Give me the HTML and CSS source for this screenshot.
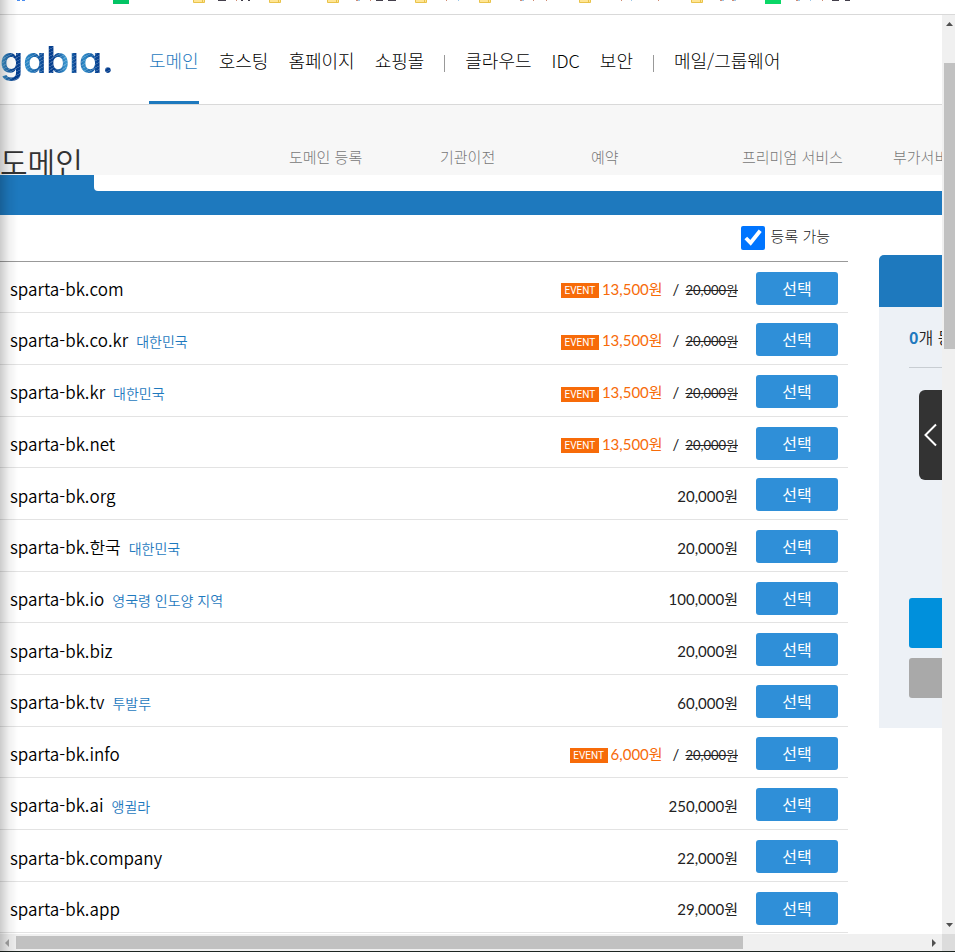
FILE: index.html
```html
<!DOCTYPE html>
<html lang="ko">
<head>
    <meta charset="UTF-8">
    <meta name="viewport" content="width=device-width, initial-scale=1.0">
    <title>도메인 - gabia</title>
    <link rel="stylesheet" href="styles.css">
</head>
<body>
    <div class="bookmarks">
        <svg width="955" height="14" viewBox="0 0 955 14" aria-hidden="true">
            <path d="M17 0h3v1h-3zM22 0h3v1h-3z" fill="#4b8df0"/>
            <path d="M113 0h16v4h-16z" fill="#03c465"/>
            <path d="M765 0h16v4h-16z" fill="#0ad767"/>
            <g fill="#ffe594" stroke="#e9c34a">
                <path d="M193.500-2v4.500h11v-4.500M202.500-2v4"/>
                <path d="M269.500-2v4.500h11v-4.500M278.500-2v4"/>
                <path d="M327.500-2v4.500h11v-4.500M336.500-2v4"/>
                <path d="M415.500-2v4.500h11v-4.500M424.500-2v4"/>
                <path d="M479.500-2v4.500h11v-4.500M488.500-2v4"/>
                <path d="M579.500-2v4.500h11v-4.500M588.500-2v4"/>
                <path d="M691.500-2v4.500h11v-4.500M700.500-2v4"/>
            </g>
            <path d="M218 0h8v1h-8zM241 0h2v1h-2zM248 0h2v1h-2zM376 0h7v1h-7zM388 0h8v1h-8zM832 0h7v1h-7zM845 0h5v1h-5z" fill="#44404c"/>
            <path d="M236 0h1v1h-1zM356 0h2v1h-2zM370 0h1v1h-1zM446 0h1v1h-1zM520 0h2v1h-2zM533 0h1v1h-1zM546 0h1v1h-1zM621 0h1v1h-1zM658 0h1v1h-1zM720 0h2v1h-2zM732 0h2v1h-2zM796 0h2v1h-2zM822 0h1v1h-1z" fill="#d08a72"/>
            <path d="M358 0h2v1h-2zM458 0h1v1h-1zM522 0h2v1h-2zM631 0h1v1h-1zM722 0h2v1h-2zM734 0h2v1h-2zM798 0h2v1h-2zM810 0h1v1h-1z" fill="#9cc8ea"/>
        </svg>
    </div>

    <div class="viewport">
        <div class="page">
            <header class="header">
                <a href="#" class="logo" aria-label="gabia">gabıa.</a>
                <nav class="nav">
                    <a href="#" class="nav-link active">도메인</a>
                    <a href="#" class="nav-link">호스팅</a>
                    <a href="#" class="nav-link">홈페이지</a>
                    <a href="#" class="nav-link">쇼핑몰</a>
                    <span class="nav-divider"></span>
                    <a href="#" class="nav-link">클라우드</a>
                    <a href="#" class="nav-link">IDC</a>
                    <a href="#" class="nav-link">보안</a>
                    <span class="nav-divider"></span>
                    <a href="#" class="nav-link">메일/그룹웨어</a>
                </nav>
            </header>

            <div class="subheader">
                <h1 class="subheader-title">도메인</h1>
                <nav class="subnav">
                    <a href="#">도메인 등록</a>
                    <a href="#">기관이전</a>
                    <a href="#">예약</a>
                    <a href="#">프리미엄 서비스</a>
                    <a href="#">부가서비스</a>
                </nav>
            </div>

            <div class="search-bar">
                <div class="search-box"></div>
            </div>

            <main class="content">
                <section class="results">
                    <div class="filter">
                        <input type="checkbox" id="available" checked>
                        <label for="available">등록 가능</label>
                    </div>
                    <table class="domains">
                        <tbody>
                            <tr>
                                <td class="domain">sparta-bk.com</td>
                                <td class="price"><span class="event">EVENT</span><span class="sale">13,500원</span><span class="slash">/</span><del>20,000원</del></td>
                                <td class="action"><button type="button" class="select">선택</button></td>
                            </tr>
                            <tr>
                                <td class="domain">sparta-bk.co.kr<span class="country">대한민국</span></td>
                                <td class="price"><span class="event">EVENT</span><span class="sale">13,500원</span><span class="slash">/</span><del>20,000원</del></td>
                                <td class="action"><button type="button" class="select">선택</button></td>
                            </tr>
                            <tr>
                                <td class="domain">sparta-bk.kr<span class="country">대한민국</span></td>
                                <td class="price"><span class="event">EVENT</span><span class="sale">13,500원</span><span class="slash">/</span><del>20,000원</del></td>
                                <td class="action"><button type="button" class="select">선택</button></td>
                            </tr>
                            <tr>
                                <td class="domain">sparta-bk.net</td>
                                <td class="price"><span class="event">EVENT</span><span class="sale">13,500원</span><span class="slash">/</span><del>20,000원</del></td>
                                <td class="action"><button type="button" class="select">선택</button></td>
                            </tr>
                            <tr>
                                <td class="domain">sparta-bk.org</td>
                                <td class="price">20,000원</td>
                                <td class="action"><button type="button" class="select">선택</button></td>
                            </tr>
                            <tr>
                                <td class="domain">sparta-bk.한국<span class="country">대한민국</span></td>
                                <td class="price">20,000원</td>
                                <td class="action"><button type="button" class="select">선택</button></td>
                            </tr>
                            <tr>
                                <td class="domain">sparta-bk.io<span class="country">영국령 인도양 지역</span></td>
                                <td class="price">100,000원</td>
                                <td class="action"><button type="button" class="select">선택</button></td>
                            </tr>
                            <tr>
                                <td class="domain">sparta-bk.biz</td>
                                <td class="price">20,000원</td>
                                <td class="action"><button type="button" class="select">선택</button></td>
                            </tr>
                            <tr>
                                <td class="domain">sparta-bk.tv<span class="country">투발루</span></td>
                                <td class="price">60,000원</td>
                                <td class="action"><button type="button" class="select">선택</button></td>
                            </tr>
                            <tr>
                                <td class="domain">sparta-bk.info</td>
                                <td class="price"><span class="event">EVENT</span><span class="sale">6,000원</span><span class="slash">/</span><del>20,000원</del></td>
                                <td class="action"><button type="button" class="select">선택</button></td>
                            </tr>
                            <tr>
                                <td class="domain">sparta-bk.ai<span class="country">앵귈라</span></td>
                                <td class="price">250,000원</td>
                                <td class="action"><button type="button" class="select">선택</button></td>
                            </tr>
                            <tr>
                                <td class="domain">sparta-bk.company</td>
                                <td class="price">22,000원</td>
                                <td class="action"><button type="button" class="select">선택</button></td>
                            </tr>
                            <tr>
                                <td class="domain">sparta-bk.app</td>
                                <td class="price">29,000원</td>
                                <td class="action"><button type="button" class="select">선택</button></td>
                            </tr>
                        </tbody>
                    </table>
                </section>

                <aside class="cart">
                    <div class="cart-head"></div>
                    <div class="cart-body">
                        <p class="cart-count"><strong>0</strong>개 등록</p>
                        <button type="button" class="cart-button" aria-label="등록"></button>
                        <button type="button" class="cart-button secondary" aria-label="삭제"></button>
                    </div>
                    <button type="button" class="drawer" aria-label="열기">
                        <svg width="14" height="24" viewBox="0 0 14 24" fill="none" stroke="#fff" stroke-width="2"><path d="M12 1.500L1.500 12L12 22.500"/></svg>
                    </button>
                </aside>
            </main>
        </div>

        <div class="scroll-y">
            <svg width="7" height="4" viewBox="0 0 7 4" fill="#505050"><path d="M0 4L3.500 0L7 4z"/></svg>
            <div class="thumb-y"></div>
            <svg width="7" height="4" viewBox="0 0 7 4" fill="#505050"><path d="M0 0L3.500 4L7 0z"/></svg>
        </div>
        <div class="scroll-x">
            <svg width="4" height="8" viewBox="0 0 4 8" fill="#a3a3a3"><path d="M4 0L0 4L4 8z"/></svg>
            <div class="track-x"><div class="thumb-x"></div></div>
            <svg width="4" height="8" viewBox="0 0 4 8" fill="#505050"><path d="M0 0L4 4L0 8z"/></svg>
        </div>
        <div class="corner"></div>
    </div>
    <div class="edge-shadow"></div>
</body>
</html>
```

FILE: styles.css
```css
* {
    margin: 0;
    padding: 0;
    box-sizing: border-box;
}

body {
    display: flex;
    flex-direction: column;
    height: 100vh;
    overflow: hidden;
    background-color: #fff;
    color: #222;
    font-family: 'Noto Sans CJK KR', sans-serif;
    font-weight: 350;
    font-size: 15px;
    border-bottom: 1px solid #1d2522;
}

a {
    color: inherit;
    text-decoration: none;
}

button {
    border: 0;
    font-family: inherit;
    cursor: pointer;
}

.bookmarks {
    flex: none;
    height: 15px;
    border-bottom: 1px solid #d9d9d9;
    overflow: hidden;
}

.bookmarks svg {
    display: block;
}

.viewport {
    flex: 1;
    min-height: 0;
    display: grid;
    grid-template-columns: minmax(0, 1fr) 13px;
    grid-template-rows: minmax(0, 1fr) 17px;
}

.page {
    overflow: hidden;
}

/* header */
.header {
    display: flex;
    height: 90px;
    border-bottom: 1px solid #d9d9d9;
}

.logo {
    width: 149px;
    font-family: Inter, sans-serif;
    font-size: 37px;
    font-weight: 600;
    line-height: 90px;
    font-feature-settings: 'cv11';
    color: transparent;
    background: repeating-linear-gradient(150deg, rgba(255, 255, 255, 0.2) 0 1px, transparent 1px 3px), linear-gradient(90deg, #4ba8da, #063f8f 14px, #063f8f 20px, #2f8cc8 26px, #063f8f 46px, #063f8f 54px, #3c98d0 66px, #063f8f 76px, #2f8cc8 84px, #063f8f 98px);
    background-clip: text;
    -webkit-background-clip: text;
}

.nav {
    display: flex;
    gap: 20px;
    font-size: 18px;
    font-weight: 300;
    line-height: 90px;
    color: #000;
    white-space: nowrap;
}

.nav-link.active {
    color: #1e79be;
    border-bottom: 3px solid #1e79be;
}

.nav-divider {
    width: 1px;
    height: 17px;
    margin-top: 40px;
    background-color: #999;
}

.subheader {
    display: flex;
    height: 70px;
    background-color: #f7f7f7;
    overflow: hidden;
}

.subheader-title {
    flex: none;
    width: 289px;
    padding-top: 36px;
    font-size: 30px;
    font-weight: 350;
    line-height: 40px;
    color: #333;
}

.subnav {
    display: grid;
    grid-template-columns: repeat(5, 151px);
    padding-top: 40px;
    font-weight: 300;
    line-height: 24px;
    color: #777;
    white-space: nowrap;
}

.search-bar {
    height: 40px;
    padding-left: 94px;
    background-color: #1e79be;
}

.search-box {
    height: 16px;
    background-color: #fff;
    border-bottom-left-radius: 4px;
}

/* results */
.content {
    display: grid;
    grid-template-columns: minmax(0, 1fr) 63px;
    gap: 31px;
}

.filter {
    display: flex;
    align-items: flex-start;
    justify-content: flex-end;
    gap: 6px;
    height: 47px;
    padding: 11px 18px 0 0;
    border-bottom: 1px solid #999;
}

.filter input {
    width: 24px;
    height: 24px;
}

.filter label {
    font-weight: 300;
    line-height: 20px;
}

.domains {
    width: 100%;
    border-spacing: 0;
}

.domains td {
    height: 52px;
    padding-top: 2px;
    border-bottom: 1px solid #e3e3e3;
    vertical-align: middle;
    white-space: nowrap;
}

.domains tr:nth-child(3n+1) td {
    height: 51px;
}

.domains .domain {
    padding-top: 4px;
    padding-left: 10px;
    font-size: 17px;
    line-height: 24px;
    color: #000;
}

.country {
    margin-left: 8px;
    font-size: 14px;
    color: #1e79be;
}

.domains .price {
    padding-top: 4px;
    font-family: Lato, 'Noto Sans CJK KR', sans-serif;
    font-weight: 400;
    text-align: right;
    line-height: 24px;
}

.event {
    display: inline-block;
    width: 38px;
    margin-right: 3px;
    background-color: #f76b09;
    color: #fff;
    font-family: Roboto, sans-serif;
    font-size: 10px;
    font-weight: 400;
    line-height: 15px;
    text-align: center;
    vertical-align: middle;
}

.sale {
    color: #f76b09;
}

.slash {
    margin: 0 6px 0 10px;
}

.price del {
    font-size: 13px;
}

.action {
    width: 110px;
    padding-right: 10px;
    text-align: right;
}

.select {
    display: block;
    width: 82px;
    height: 33px;
    margin-left: auto;
    border-radius: 3px;
    background-color: #2f8fd8;
    color: #fff;
    font-size: 16px;
    font-weight: 400;
    line-height: 33px;
}

/* cart, runs past the right edge of the page */
.cart {
    position: relative;
    width: 240px;
    margin-top: 40px;
}

.cart-head {
    height: 52px;
    border-radius: 5px 5px 0 0;
    background-color: #1e79be;
}

.cart-body {
    display: flex;
    flex-direction: column;
    gap: 10px;
    height: 421px;
    padding: 0 30px 30px;
    background-color: #edf1f6;
}

.cart-count {
    height: 61px;
    margin-bottom: auto;
    border-bottom: 1px solid #c8cdd2;
    font-size: 16px;
    line-height: 60px;
}

.cart-count strong {
    font-weight: 700;
    color: #1e79be;
}

.cart-button {
    height: 50px;
    border-radius: 3px;
    background-color: #0090dc;
}

.cart-button.secondary {
    height: 40px;
    background-color: #a9a9a9;
}

.drawer {
    position: absolute;
    top: 135px;
    left: 40px;
    width: 60px;
    height: 90px;
    padding-left: 5px;
    border-radius: 6px;
    background-color: #333;
    text-align: left;
}

.drawer svg {
    display: block;
}

/* scrollbars */
.scroll-y {
    display: flex;
    flex-direction: column;
    align-items: center;
    padding: 7px 0 7px 2px;
    background-color: #f0f0f0;
}

.thumb-y {
    width: 100%;
    height: 286px;
    margin: 37px 0 auto;
    background-color: #c1c1c1;
}

.scroll-x {
    display: flex;
    align-items: center;
    gap: 7px;
    padding: 0 6px 0 5px;
    background-color: #f0f0f0;
}

.track-x {
    flex: 1;
}

.thumb-x {
    width: 80%;
    height: 13px;
    background-color: #c1c1c1;
}

.corner {
    background-color: #dcdcdc;
}

.edge-shadow {
    position: fixed;
    top: 0;
    bottom: 0;
    left: 0;
    width: 18px;
    background: linear-gradient(to right, rgba(0, 0, 0, 0.2), rgba(0, 0, 0, 0.06) 50%, transparent);
    pointer-events: none;
}
```
